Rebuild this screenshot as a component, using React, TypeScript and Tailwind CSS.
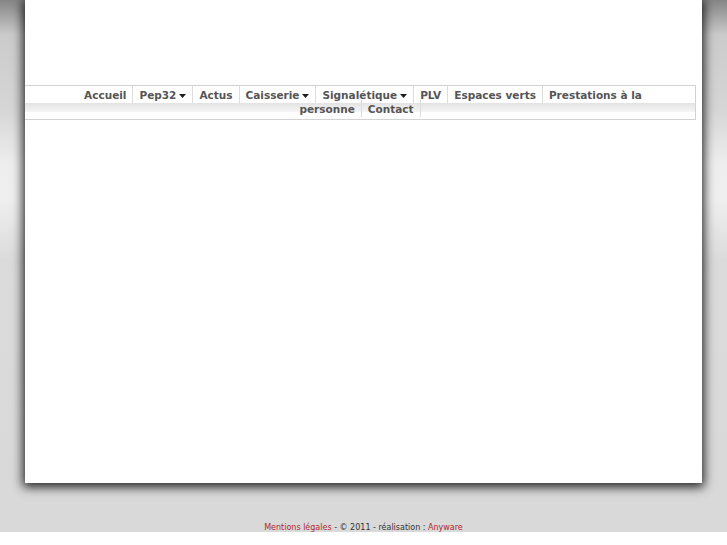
import React from "react";

const Arrow = () => (
  <svg width="7" height="4" viewBox="0 0 7 4" className="inline-block align-middle ml-[3px]">
    <path d="M0 0 H7 L3.5 4 Z" fill="#1e1e1e" />
  </svg>
);

const items: { label: string; arrow?: boolean }[] = [
  { label: "Accueil" },
  { label: "Pep32", arrow: true },
  { label: "Actus" },
  { label: "Caisserie", arrow: true },
  { label: "Signalétique", arrow: true },
  { label: "PLV" },
];

export default function App() {
  return (
    <div className="min-h-[545px] bg-white font-['DejaVu_Sans',sans-serif]">
      <div className="bg-[linear-gradient(to_bottom,#858585_0px,#cbcbcb_35px,#d6d6d6_110px,#eeeeee_165px,#efefef_200px,#dbdbdb_260px,#d9d9d9_100%)]">
        <div className="mx-auto w-[677px] h-[483px] bg-white shadow-[0_2px_10px_2px_rgba(0,0,0,0.85)]">
          <div className="h-[85px]" />
          <ul className="mr-[6px] border-t border-b border-r border-[#d2d2d2] text-center leading-[14px] pt-[1.5px] pb-[3.5px] text-[10.5px] font-bold text-[#555555] bg-[linear-gradient(to_bottom,#ffffff_0px,#ffffff_16.5px,#e2e2e2_16.5px,#f5f5f5_26px,#ffffff_26px)]">
            {items.map((it) => (
              <li key={it.label} className="inline border-r border-[#dcdcdc] px-[6px] pt-[3px] pb-[2px]">
                {it.label}
                {it.arrow && <Arrow />}
              </li>
            ))}
            <li className="inline border-r border-[#dcdcdc] px-[6px] pt-[3px] pb-[2px]">Espaces verts</li>
            <li className="inline border-r border-[#dcdcdc] px-[6px] pt-[3px] pb-[2px]">
              Prestations à la
              <br />
              personne
            </li>
            <li className="inline border-r border-[#dcdcdc] px-[6px] pt-[3px] pb-[2px]">Contact</li>
          </ul>
        </div>
        <div className="pt-[41px] text-center text-[8px] leading-[8px] text-[#333333]">
          <span className="text-[#b0262c]">Mentions légales</span> - © 2011 - réalisation :{" "}
          <span className="text-[#b0262c]">Anyware</span>
        </div>
      </div>
    </div>
  );
}
